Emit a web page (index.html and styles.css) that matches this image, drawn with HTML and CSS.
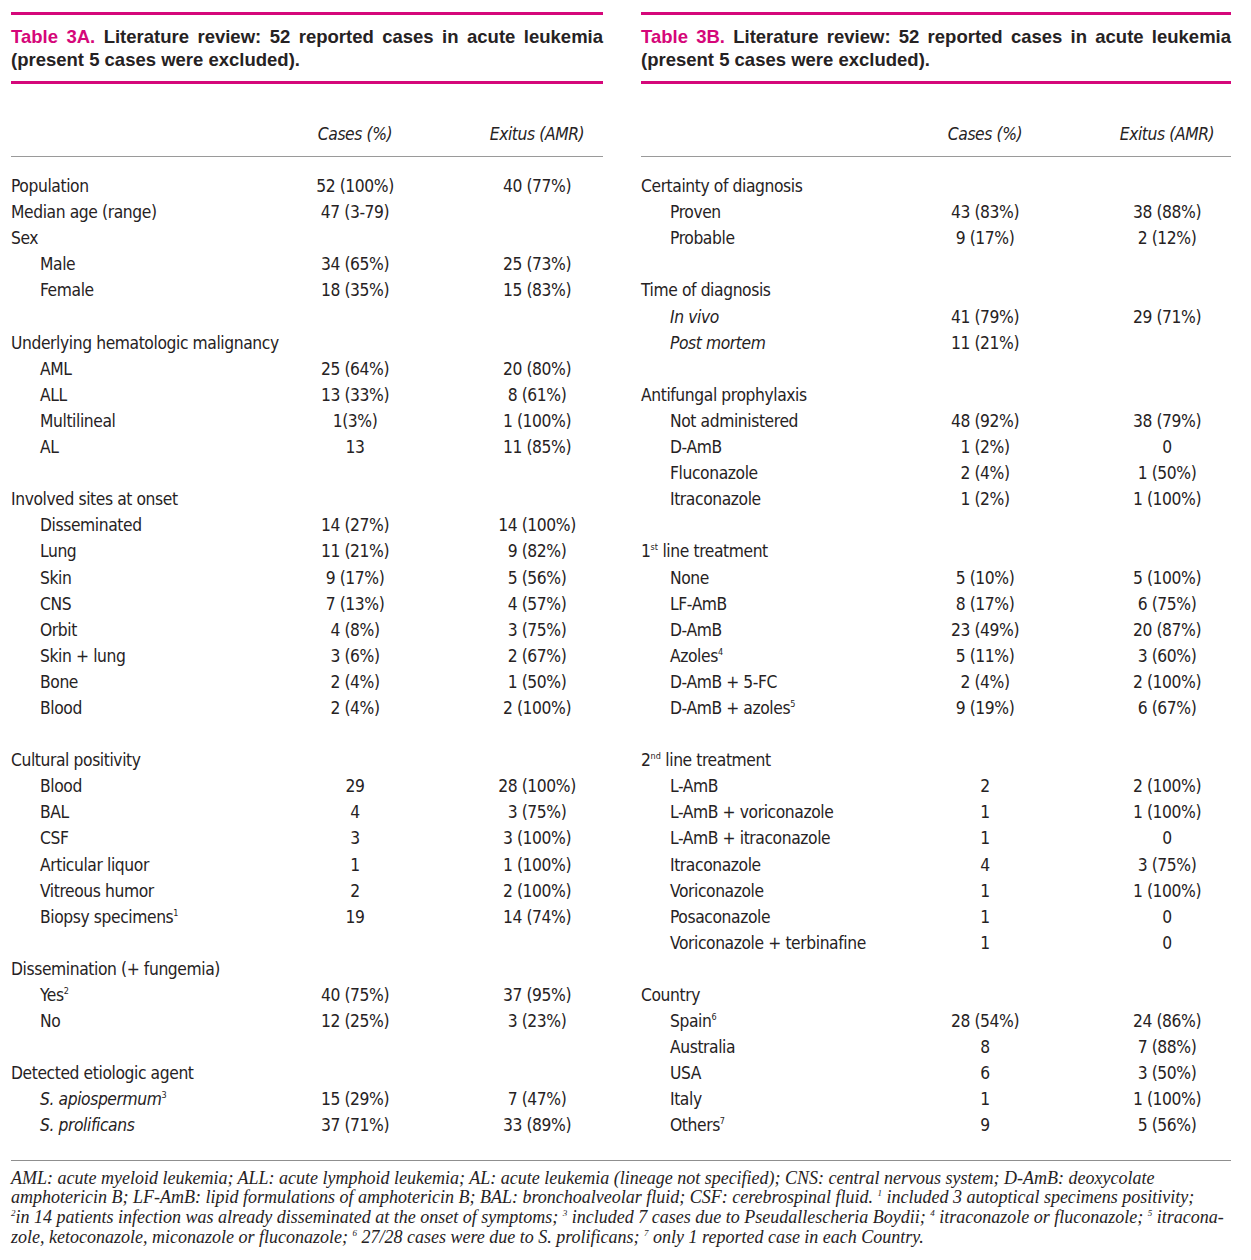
FILE: index.html
```html
<!DOCTYPE html>
<html lang="en">
<head>
<meta charset="utf-8">
<title>Table 3A / 3B – Literature review</title>
<link rel="stylesheet" href="styles.css">
</head>
<body>
<div class="page">
  <div class="tables">
    <section class="tbl">
      <div class="rule-pink"></div>
      <h2 class="caption"><span class="lbl">Table 3A.</span> Literature review: 52 reported cases in acute leukemia (present 5 cases were excluded).</h2>
      <div class="rule-pink"></div>
      <div class="grid head"><span></span><span class="c">Cases (%)</span><span class="c">Exitus (AMR)</span></div>
      <div class="rule-gray"></div>
      <div class="grid body">
        <span>Population</span><span class="c">52 (100%)</span><span class="c">40 (77%)</span>
        <span>Median age (range)</span><span class="c">47 (3-79)</span><span class="c"></span>
        <span>Sex</span><span></span><span></span>
        <span class="in">Male</span><span class="c">34 (65%)</span><span class="c">25 (73%)</span>
        <span class="in">Female</span><span class="c">18 (35%)</span><span class="c">15 (83%)</span>
        <div class="gap"></div>
        <span>Underlying hematologic malignancy</span><span></span><span></span>
        <span class="in">AML</span><span class="c">25 (64%)</span><span class="c">20 (80%)</span>
        <span class="in">ALL</span><span class="c">13 (33%)</span><span class="c">8 (61%)</span>
        <span class="in">Multilineal</span><span class="c">1(3%)</span><span class="c">1 (100%)</span>
        <span class="in">AL</span><span class="c">13</span><span class="c">11 (85%)</span>
        <div class="gap"></div>
        <span>Involved sites at onset</span><span></span><span></span>
        <span class="in">Disseminated</span><span class="c">14 (27%)</span><span class="c">14 (100%)</span>
        <span class="in">Lung</span><span class="c">11 (21%)</span><span class="c">9 (82%)</span>
        <span class="in">Skin</span><span class="c">9 (17%)</span><span class="c">5 (56%)</span>
        <span class="in">CNS</span><span class="c">7 (13%)</span><span class="c">4 (57%)</span>
        <span class="in">Orbit</span><span class="c">4 (8%)</span><span class="c">3 (75%)</span>
        <span class="in">Skin + lung</span><span class="c">3 (6%)</span><span class="c">2 (67%)</span>
        <span class="in">Bone</span><span class="c">2 (4%)</span><span class="c">1 (50%)</span>
        <span class="in">Blood</span><span class="c">2 (4%)</span><span class="c">2 (100%)</span>
        <div class="gap"></div>
        <span>Cultural positivity</span><span></span><span></span>
        <span class="in">Blood</span><span class="c">29</span><span class="c">28 (100%)</span>
        <span class="in">BAL</span><span class="c">4</span><span class="c">3 (75%)</span>
        <span class="in">CSF</span><span class="c">3</span><span class="c">3 (100%)</span>
        <span class="in">Articular liquor</span><span class="c">1</span><span class="c">1 (100%)</span>
        <span class="in">Vitreous humor</span><span class="c">2</span><span class="c">2 (100%)</span>
        <span class="in">Biopsy specimens<sup>1</sup></span><span class="c">19</span><span class="c">14 (74%)</span>
        <div class="gap"></div>
        <span>Dissemination (+ fungemia)</span><span></span><span></span>
        <span class="in">Yes<sup>2</sup></span><span class="c">40 (75%)</span><span class="c">37 (95%)</span>
        <span class="in">No</span><span class="c">12 (25%)</span><span class="c">3 (23%)</span>
        <div class="gap"></div>
        <span>Detected etiologic agent</span><span></span><span></span>
        <span class="in"><i>S. apiospermum</i><sup>3</sup></span><span class="c">15 (29%)</span><span class="c">7 (47%)</span>
        <span class="in"><i>S. prolificans</i></span><span class="c">37 (71%)</span><span class="c">33 (89%)</span>
      </div>
    </section>

    <section class="tbl">
      <div class="rule-pink"></div>
      <h2 class="caption"><span class="lbl">Table 3B.</span> Literature review: 52 reported cases in acute leukemia (present 5 cases were excluded).</h2>
      <div class="rule-pink"></div>
      <div class="grid head"><span></span><span class="c">Cases (%)</span><span class="c">Exitus (AMR)</span></div>
      <div class="rule-gray"></div>
      <div class="grid body">
        <span>Certainty of diagnosis</span><span></span><span></span>
        <span class="in">Proven</span><span class="c">43 (83%)</span><span class="c">38 (88%)</span>
        <span class="in">Probable</span><span class="c">9 (17%)</span><span class="c">2 (12%)</span>
        <div class="gap"></div>
        <span>Time of diagnosis</span><span></span><span></span>
        <span class="in"><i>In vivo</i></span><span class="c">41 (79%)</span><span class="c">29 (71%)</span>
        <span class="in"><i>Post mortem</i></span><span class="c">11 (21%)</span><span class="c"></span>
        <div class="gap"></div>
        <span>Antifungal prophylaxis</span><span></span><span></span>
        <span class="in">Not administered</span><span class="c">48 (92%)</span><span class="c">38 (79%)</span>
        <span class="in">D-AmB</span><span class="c">1 (2%)</span><span class="c">0</span>
        <span class="in">Fluconazole</span><span class="c">2 (4%)</span><span class="c">1 (50%)</span>
        <span class="in">Itraconazole</span><span class="c">1 (2%)</span><span class="c">1 (100%)</span>
        <div class="gap"></div>
        <span>1<sup>st</sup> line treatment</span><span></span><span></span>
        <span class="in">None</span><span class="c">5 (10%)</span><span class="c">5 (100%)</span>
        <span class="in">LF-AmB</span><span class="c">8 (17%)</span><span class="c">6 (75%)</span>
        <span class="in">D-AmB</span><span class="c">23 (49%)</span><span class="c">20 (87%)</span>
        <span class="in">Azoles<sup>4</sup></span><span class="c">5 (11%)</span><span class="c">3 (60%)</span>
        <span class="in">D-AmB + 5-FC</span><span class="c">2 (4%)</span><span class="c">2 (100%)</span>
        <span class="in">D-AmB + azoles<sup>5</sup></span><span class="c">9 (19%)</span><span class="c">6 (67%)</span>
        <div class="gap"></div>
        <span>2<sup>nd</sup> line treatment</span><span></span><span></span>
        <span class="in">L-AmB</span><span class="c">2</span><span class="c">2 (100%)</span>
        <span class="in">L-AmB + voriconazole</span><span class="c">1</span><span class="c">1 (100%)</span>
        <span class="in">L-AmB + itraconazole</span><span class="c">1</span><span class="c">0</span>
        <span class="in">Itraconazole</span><span class="c">4</span><span class="c">3 (75%)</span>
        <span class="in">Voriconazole</span><span class="c">1</span><span class="c">1 (100%)</span>
        <span class="in">Posaconazole</span><span class="c">1</span><span class="c">0</span>
        <span class="in">Voriconazole + terbinafine</span><span class="c">1</span><span class="c">0</span>
        <div class="gap"></div>
        <span>Country</span><span></span><span></span>
        <span class="in">Spain<sup>6</sup></span><span class="c">28 (54%)</span><span class="c">24 (86%)</span>
        <span class="in">Australia</span><span class="c">8</span><span class="c">7 (88%)</span>
        <span class="in">USA</span><span class="c">6</span><span class="c">3 (50%)</span>
        <span class="in">Italy</span><span class="c">1</span><span class="c">1 (100%)</span>
        <span class="in">Others<sup>7</sup></span><span class="c">9</span><span class="c">5 (56%)</span>
      </div>
    </section>
  </div>

  <footer class="notes">
    <p>AML: acute myeloid leukemia; ALL: acute lymphoid leukemia; AL: acute leukemia (lineage not specified); CNS: central nervous system; D-AmB: deoxycolate<br>amphotericin B; LF-AmB: lipid formulations of amphotericin B; BAL: bronchoalveolar fluid; CSF: cerebrospinal fluid. <sup>1</sup> included 3 autoptical specimens positivity;<br><sup>2</sup>in 14 patients infection was already disseminated at the onset of symptoms; <sup>3</sup> included 7 cases due to Pseudallescheria Boydii; <sup>4</sup> itraconazole or fluconazole; <sup>5</sup> itracona-<br>zole, ketoconazole, miconazole or fluconazole; <sup>6</sup> 27/28 cases were due to S. prolificans; <sup>7</sup> only 1 reported case in each Country.</p>
  </footer>
</div>
</body>
</html>
```

FILE: styles.css
```css
html, body {
  margin: 0;
  padding: 0;
  background: #ffffff;
}

body {
  color: #262223;
  font-family: "DejaVu Sans Condensed", "DejaVu Sans", sans-serif;
  font-stretch: condensed;
}

.page {
  padding: 12px 20px 0 11px;
}

.tables {
  display: grid;
  grid-template-columns: 592px 590px;
  column-gap: 38px;
}

.rule-pink {
  height: 3px;
  background: #d5077a;
}

.rule-gray {
  height: 1px;
  background: #9a9a9a;
}

.caption {
  margin: 0;
  padding: 10px 0 10px;
  font-family: "Liberation Sans", Arial, sans-serif;
  font-stretch: normal;
  font-weight: bold;
  font-size: 18.5px;
  line-height: 23px;
  text-align: justify;
  color: #262223;
}

.caption .lbl {
  color: #d5077a;
}

.grid {
  display: grid;
  grid-template-columns: 222px 120px 120px;
  column-gap: 62px;
  font-size: 17.3px;
  letter-spacing: -0.4px;
  line-height: 26.1px;
  white-space: nowrap;
}

.head {
  margin-top: 37px;
  padding-bottom: 9px;
  font-style: italic;
}

.body {
  padding-top: 16px;
}

.c {
  text-align: center;
}

.in {
  padding-left: 29px;
}

.gap {
  grid-column: 1 / -1;
  height: 26.1px;
}

.grid sup {
  font-size: 9px;
  letter-spacing: 0;
  line-height: 0;
  vertical-align: 7px;
}

.notes {
  margin-top: 21px;
  border-top: 1px solid #8f8f8f;
  padding-top: 8px;
}

.notes p {
  margin: 0;
  font-family: "Liberation Serif", "Times New Roman", serif;
  font-style: italic;
  font-size: 18px;
  line-height: 19.7px;
  white-space: nowrap;
  color: #262223;
}

.notes sup {
  font-size: 9px;
  line-height: 0;
  vertical-align: 7px;
}
```
